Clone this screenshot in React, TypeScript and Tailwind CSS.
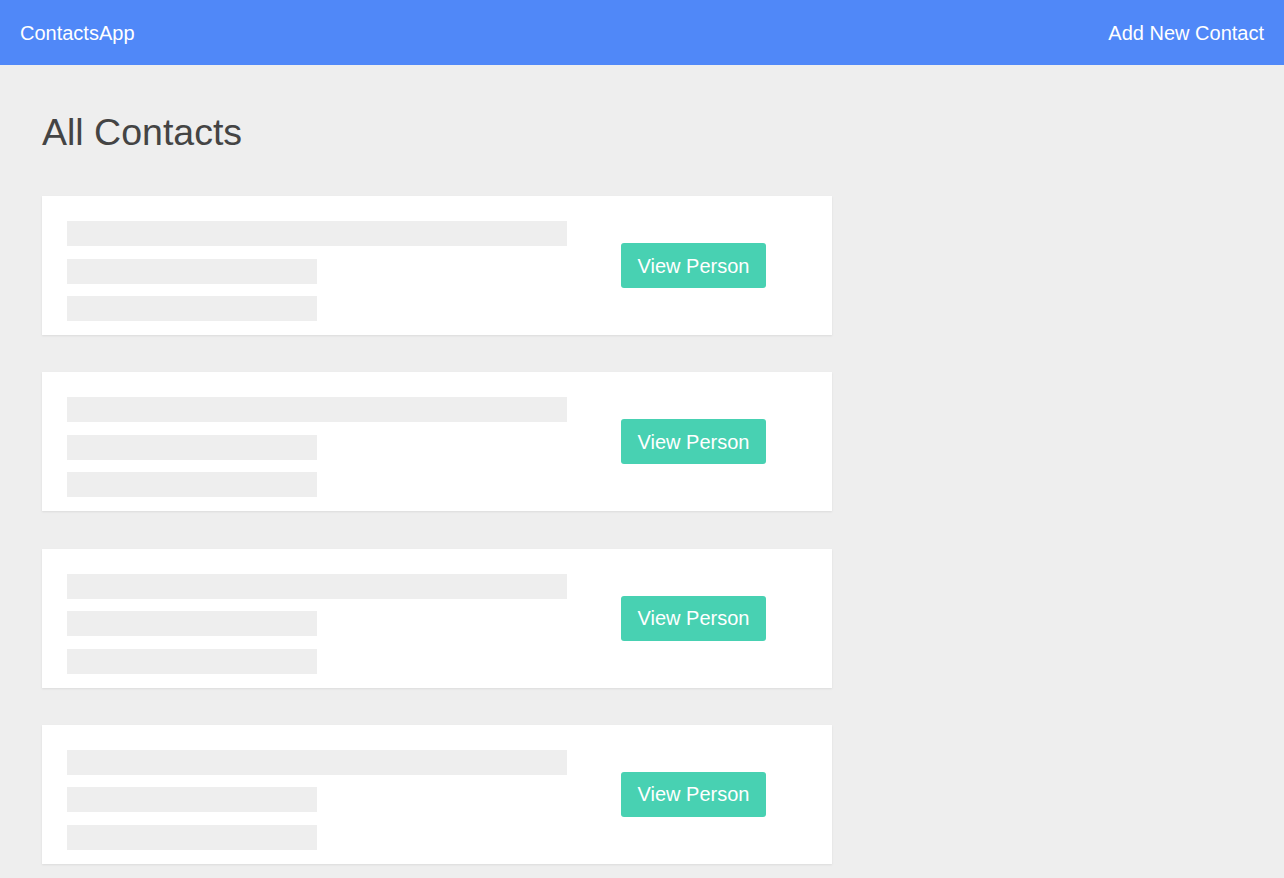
import React from 'react';

const contacts = [1, 2, 3, 4];

const ContactCard = () => (
  <div className="bg-white shadow-[0_1px_2px_rgba(0,0,0,0.08)] flex items-center pl-[25px] pt-[25px] pb-[14px] h-[139px]">
    <div className="flex flex-col gap-[12.5px] w-[500px] self-start">
      <div className="h-[25px] w-[500px] bg-[#eeeeee]" />
      <div className="h-[25px] w-[250px] bg-[#eeeeee]" />
      <div className="h-[25px] w-[250px] bg-[#eeeeee]" />
    </div>
    <button className="ml-[54px] -mt-[11px] w-[145px] h-[45px] rounded-[3px] bg-[#48d1b2] text-white text-[20px] leading-none">
      View Person
    </button>
  </div>
);

export default function App() {
  return (
    <div className="min-h-screen bg-[#eeeeee] font-['Liberation_Sans',Arial,sans-serif]">
      {/* Top bar */}
      <header className="h-[65px] bg-[#5088f8] text-white flex items-center justify-between px-5 text-[20px]">
        <span>ContactsApp</span>
        <span>Add New Contact</span>
      </header>

      <main className="px-[42px] pb-10">
        <h1 className="mt-[46px] mb-[43px] text-[37.5px] leading-[42px] text-[#444444]">All Contacts</h1>
        <div className="w-[790px] flex flex-col gap-[37.3px]">
          {contacts.map(c => (
            <ContactCard key={c} />
          ))}
        </div>
      </main>
    </div>
  );
}
